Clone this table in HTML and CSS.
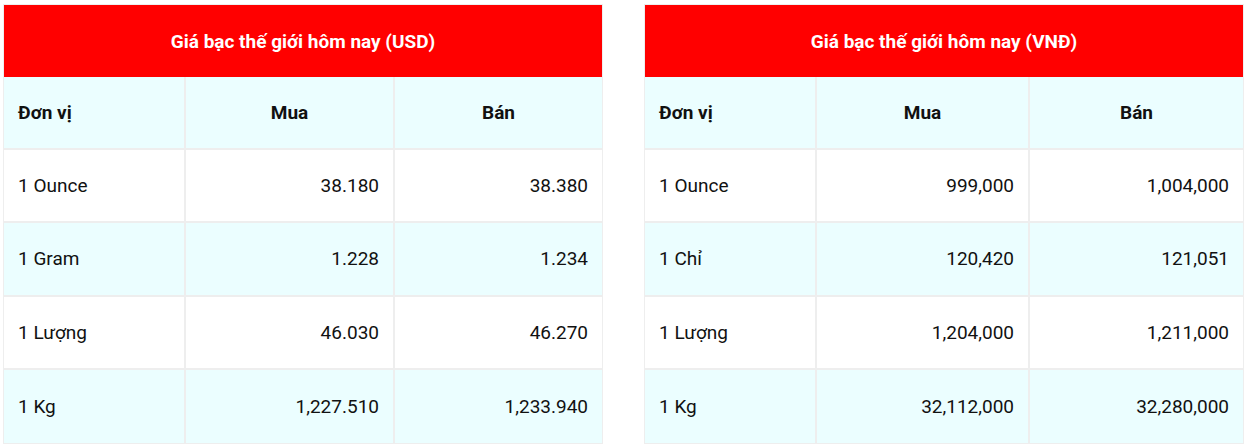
FILE: index.html
```html
<!DOCTYPE html>
<html lang="vi">
<head>
<meta charset="utf-8">
<link rel="stylesheet" href="styles.css">
</head>
<body>
<div class="wrap">
  <table class="price usd">
    <colgroup><col class="c1"><col class="c2"><col class="c3"></colgroup>
    <thead>
      <tr><th class="title" colspan="3">Giá bạc thế giới hôm nay (USD)</th></tr>
      <tr class="head"><th class="unit">Đơn vị</th><th>Mua</th><th>Bán</th></tr>
    </thead>
    <tbody>
      <tr class="odd"><td class="unit">1 Ounce</td><td>38.180</td><td>38.380</td></tr>
      <tr class="even"><td class="unit">1 Gram</td><td>1.228</td><td>1.234</td></tr>
      <tr class="odd"><td class="unit">1 Lượng</td><td>46.030</td><td>46.270</td></tr>
      <tr class="even"><td class="unit">1 Kg</td><td>1,227.510</td><td>1,233.940</td></tr>
    </tbody>
  </table>
  <table class="price vnd">
    <colgroup><col class="c1"><col class="c2"><col class="c3"></colgroup>
    <thead>
      <tr><th class="title" colspan="3">Giá bạc thế giới hôm nay (VNĐ)</th></tr>
      <tr class="head"><th class="unit">Đơn vị</th><th>Mua</th><th>Bán</th></tr>
    </thead>
    <tbody>
      <tr class="odd"><td class="unit">1 Ounce</td><td>999,000</td><td>1,004,000</td></tr>
      <tr class="even"><td class="unit">1 Chỉ</td><td>120,420</td><td>121,051</td></tr>
      <tr class="odd"><td class="unit">1 Lượng</td><td>1,204,000</td><td>1,211,000</td></tr>
      <tr class="even"><td class="unit">1 Kg</td><td>32,112,000</td><td>32,280,000</td></tr>
    </tbody>
  </table>
</div>
</body>
</html>
```
FILE: styles.css
```css
html, body {
  margin: 0;
  padding: 0;
  background: #ffffff;
}
body {
  font-family: Roboto, "Liberation Sans", sans-serif;
  color: #111111;
}
.wrap {
  display: flex;
  gap: 41px;
  padding: 4px 0 0 3px;
}
.price {
  width: 600px;
  border-collapse: separate;
  border-spacing: 0;
  border: 1px solid #eeeeee;
  table-layout: fixed;
}
.usd .c1 { width: 182px; }
.usd .c2 { width: 209px; }
.usd .c3 { width: 207px; }
.vnd .c1 { width: 172px; }
.vnd .c2 { width: 213px; }
.vnd .c3 { width: 213px; }

.price th, .price td {
  padding: 0 14px;
  font-size: 19px;
  box-sizing: border-box;
  border-right: 2px solid #eeeeee;
  border-bottom: 2px solid #eeeeee;
}
.price tr > :last-child {
  border-right: 0;
}
.price tbody tr:last-child td {
  border-bottom: 0;
}
.price th.title {
  background: #ff0000;
  color: #ffffff;
  font-size: 19px;
  font-weight: 700;
  height: 72px;
  border: 0;
  text-align: center;
}
.head th {
  background: #ebfeff;
  font-weight: 700;
  text-align: center;
  height: 73px;
}
.head th.unit {
  text-align: left;
}
.price td {
  text-align: right;
  height: 73.25px;
}
.price td.unit {
  text-align: left;
}
.odd td { background: #ffffff; }
.even td { background: #ebfeff; }
```
